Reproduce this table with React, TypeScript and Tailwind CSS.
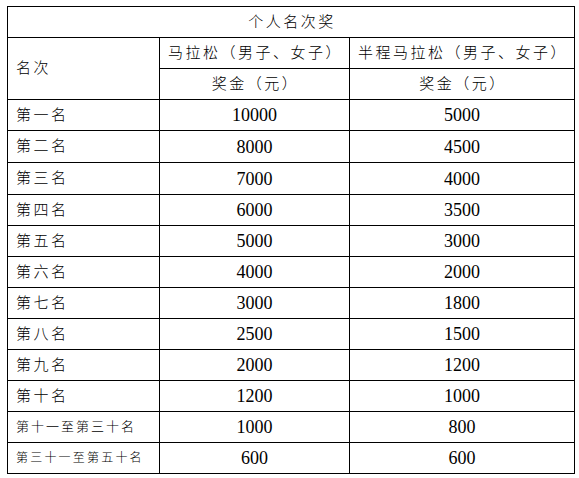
const rows = [
  { rank: "第一名", full: "10000", half: "5000" },
  { rank: "第二名", full: "8000", half: "4500" },
  { rank: "第三名", full: "7000", half: "4000" },
  { rank: "第四名", full: "6000", half: "3500" },
  { rank: "第五名", full: "5000", half: "3000" },
  { rank: "第六名", full: "4000", half: "2000" },
  { rank: "第七名", full: "3000", half: "1800" },
  { rank: "第八名", full: "2500", half: "1500" },
  { rank: "第九名", full: "2000", half: "1200" },
  { rank: "第十名", full: "1200", half: "1000" },
  { rank: "第十一至第三十名", full: "1000", half: "800", small: "text-[13px] tracking-[2px]" },
  { rank: "第三十一至第五十名", full: "600", half: "600", small: "text-[12px] tracking-[2.2px]" },
];

const cell = "flex items-center bg-white";
const cjk = "font-light text-[15px] tracking-[2.5px]";

export default function App() {
  return (
    <div className="min-h-screen bg-white pl-[7px] pt-[6px] text-black [font-family:'Liberation_Serif','Noto_Sans_CJK_SC',serif]">
      <div className="grid w-[568px] grid-cols-[151px_189px_224px] grid-rows-[30px_30px_30px_30px_31px_31px_30px_30px_30px_30px_30px_30px_30px_30px_30px] gap-px bg-black p-px">
        <div className={`${cell} ${cjk} col-span-3 justify-center pl-[2px]`}>个人名次奖</div>
        <div className={`${cell} ${cjk} row-span-2 pl-[8px]`}>名次</div>
        <div className={`${cell} ${cjk} justify-center pl-[2px]`}>马拉松（男子、女子）</div>
        <div className={`${cell} ${cjk} justify-center pl-[2px]`}>半程马拉松（男子、女子）</div>
        <div className={`${cell} ${cjk} justify-center pl-[2px]`}>奖金（元）</div>
        <div className={`${cell} ${cjk} justify-center pl-[2px]`}>奖金（元）</div>

        {rows.map((r) => (
          <div key={r.rank} className="contents">
            <div className={`${cell} pl-[8px] font-light ${r.small ?? "text-[15px] tracking-[2.5px]"}`}>
              {r.rank}
            </div>
            <div className={`${cell} justify-center pt-px text-[18px]`}>{r.full}</div>
            <div className={`${cell} justify-center pt-px text-[18px]`}>{r.half}</div>
          </div>
        ))}
      </div>
    </div>
  );
}
